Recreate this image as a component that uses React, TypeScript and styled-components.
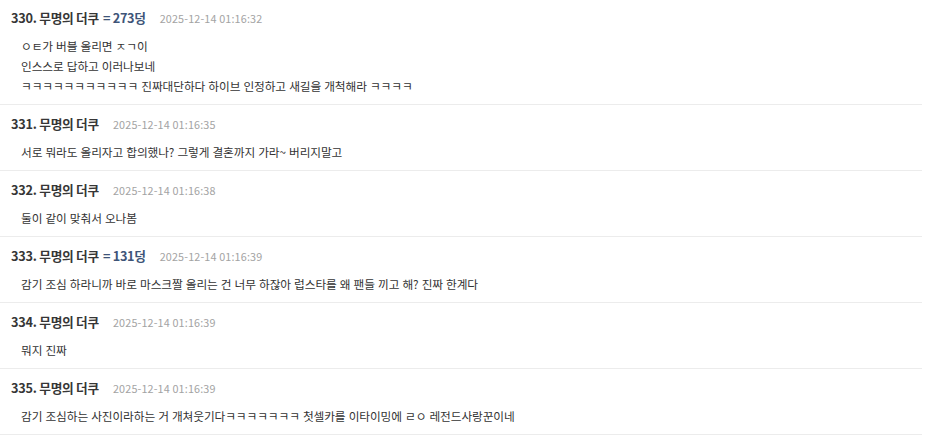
import React from "react";
import styled, { createGlobalStyle } from "styled-components";

const Global = createGlobalStyle`
  html, body { margin: 0; padding: 0; background: #fff; }
  body { font-family: "Noto Sans CJK KR", "Noto Sans", sans-serif; -webkit-font-smoothing: antialiased; }
`;

const List = styled.div`
  width: 922px;
  margin-top: -1px;
`;

const Row = styled.div`
  padding: 10px 0 8px 11px;
  border-bottom: 1px solid #ececec;
`;

const Header = styled.div`
  display: flex;
  align-items: baseline;
  height: 18px;
  line-height: 18px;
`;

const Name = styled.span`
  font-size: 12.7px;
  font-weight: 700;
  color: #363636;
  letter-spacing: -0.25px;
`;

const Score = styled.span`
  font-size: 12.7px;
  font-weight: 700;
  color: #3e5478;
  margin-left: 4px;
  letter-spacing: -0.3px;
`;

const DateText = styled.span`
  font-size: 10.8px;
  color: #a3a3a3;
  margin-left: 14px;
  letter-spacing: 0.15px;
`;

const Body = styled.div`
  margin-top: 9px;
  padding-left: 10px;
  font-size: 11.7px;
  line-height: 20px;
  color: #333;
  letter-spacing: -0.1px;
  word-spacing: 0.6px;
`;

const Line = styled.div``;

type Item = { no: number; score?: number; date: string; lines: string[] };

const items: Item[] = [
  {
    no: 330,
    score: 273,
    date: "2025-12-14 01:16:32",
    lines: [
      "ㅇㅌ가 버블 올리면 ㅈㄱ이",
      "인스스로 답하고 이러나보네",
      "ㅋㅋㅋㅋㅋㅋㅋㅋㅋㅋㅋ 진짜대단하다 하이브 인정하고 새길을 개척해라 ㅋㅋㅋㅋ",
    ],
  },
  { no: 331, date: "2025-12-14 01:16:35", lines: ["서로 뭐라도 올리자고 합의했나? 그렇게 결혼까지 가라~ 버리지말고"] },
  { no: 332, date: "2025-12-14 01:16:38", lines: ["둘이 같이 맞춰서 오나봄"] },
  {
    no: 333,
    score: 131,
    date: "2025-12-14 01:16:39",
    lines: ["감기 조심 하라니까 바로 마스크짤 올리는 건 너무 하잖아 럽스타를 왜 팬들 끼고 해? 진짜 한계다"],
  },
  { no: 334, date: "2025-12-14 01:16:39", lines: ["뭐지 진짜"] },
  {
    no: 335,
    date: "2025-12-14 01:16:39",
    lines: ["감기 조심하는 사진이라하는 거 개쳐웃기다ㅋㅋㅋㅋㅋㅋㅋ 첫셀카를 이타이밍에 ㄹㅇ 레전드사랑꾼이네"],
  },
];

export default function App() {
  return (
    <>
      <Global />
      <List>
        {items.map((it) => (
          <Row key={it.no}>
            <Header>
              <Name>{it.no}. 무명의 더쿠</Name>
              {it.score !== undefined && <Score>= {it.score}덩</Score>}
              <DateText>{it.date}</DateText>
            </Header>
            <Body>
              {it.lines.map((l, i) => (
                <Line key={i}>{l}</Line>
              ))}
            </Body>
          </Row>
        ))}
      </List>
    </>
  );
}
